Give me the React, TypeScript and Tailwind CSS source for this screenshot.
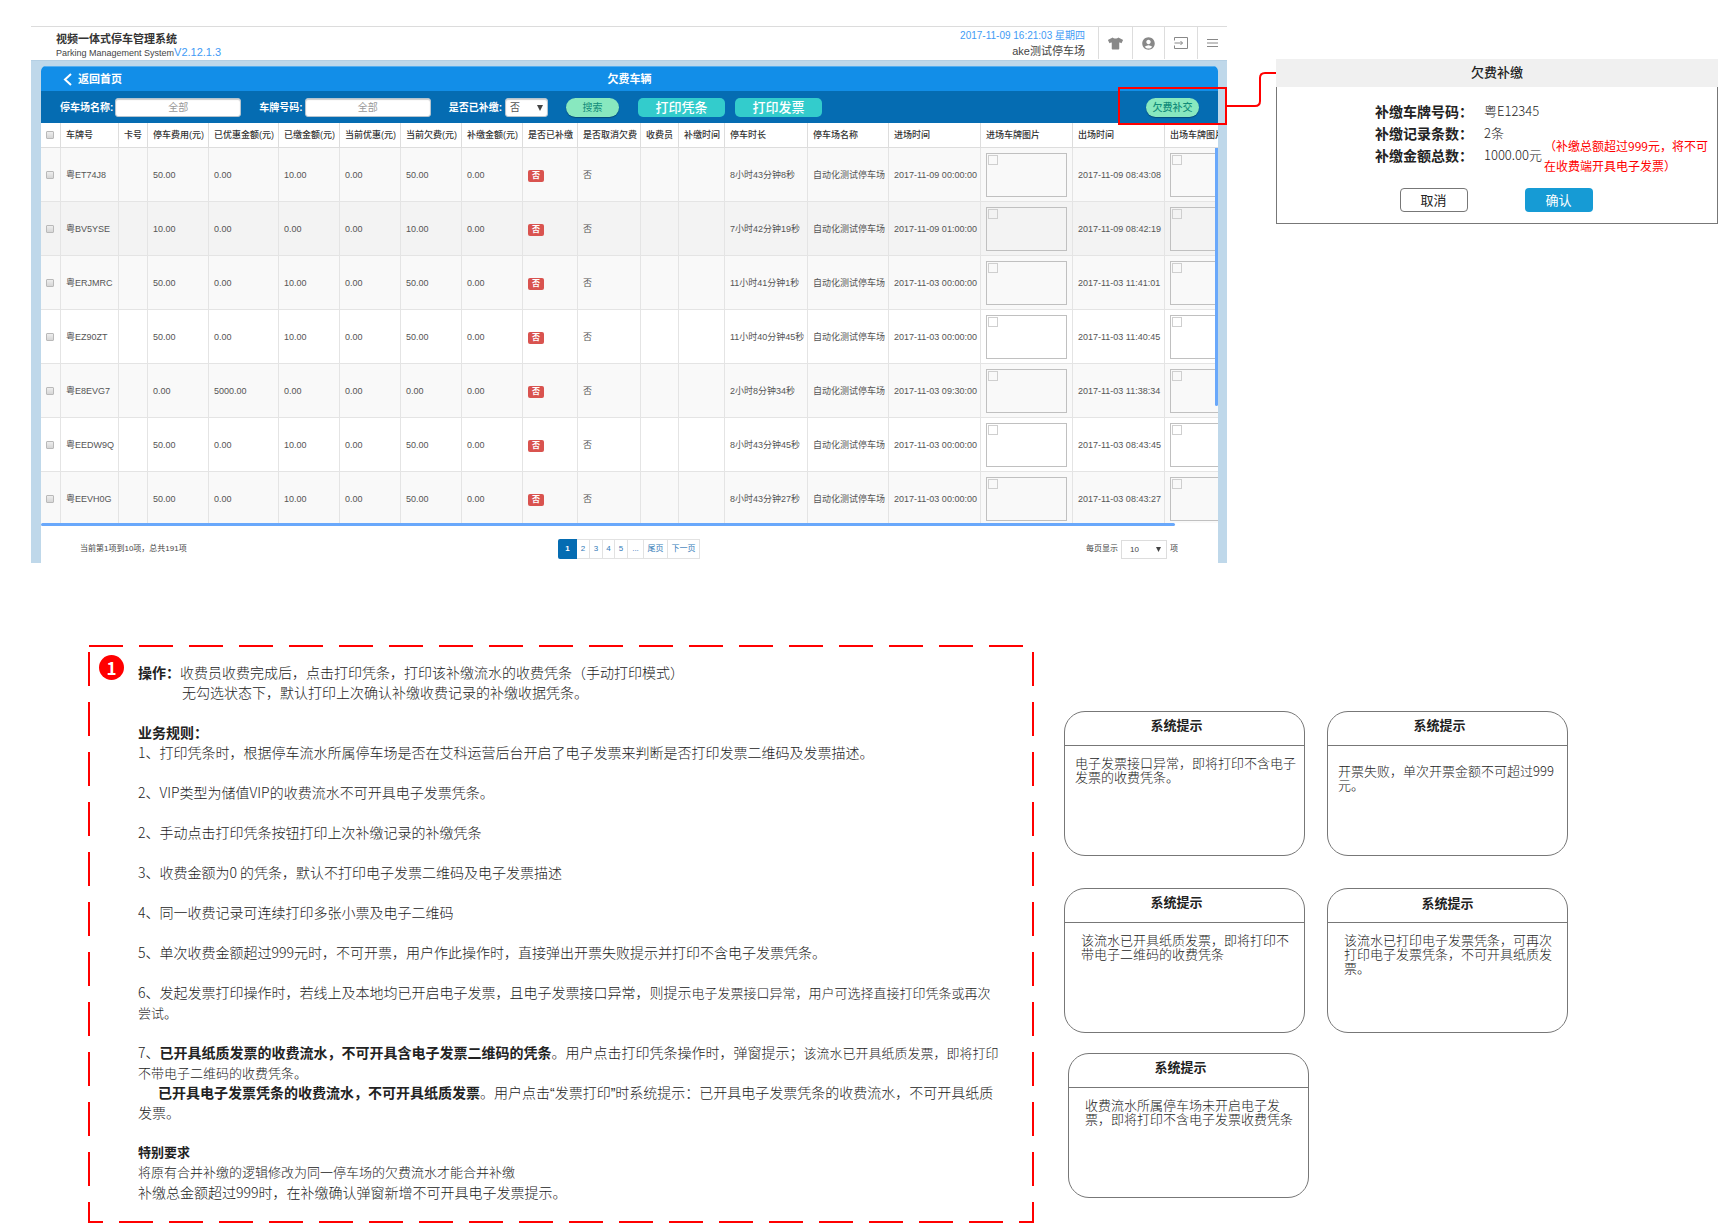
import React from "react";
import { MdAccountCircle } from "react-icons/md";
import { FaTshirt } from "react-icons/fa";

type Column = { key: string; label: string; width: string };

const columns: Column[] = [
  { key: "plate", label: "车牌号", width: "w-[58px]" },
  { key: "card", label: "卡号", width: "w-[29px]" },
  { key: "fee", label: "停车费用(元)", width: "w-[61px]" },
  { key: "discounted", label: "已优惠金额(元)", width: "w-[70px]" },
  { key: "paid", label: "已缴金额(元)", width: "w-[61px]" },
  { key: "discount", label: "当前优惠(元)", width: "w-[61px]" },
  { key: "owed", label: "当前欠费(元)", width: "w-[61px]" },
  { key: "makeup", label: "补缴金额(元)", width: "w-[61px]" },
  { key: "settled", label: "是否已补缴", width: "w-[55px]" },
  { key: "cancelled", label: "是否取消欠费", width: "w-[63px]" },
  { key: "collector", label: "收费员", width: "w-[38px]" },
  { key: "makeupTime", label: "补缴时间", width: "w-[46px]" },
  { key: "duration", label: "停车时长", width: "w-[83px]" },
  { key: "lot", label: "停车场名称", width: "w-[81px]" },
  { key: "inTime", label: "进场时间", width: "w-[92px]" },
  { key: "inImage", label: "进场车牌图片", width: "w-[92px]" },
  { key: "outTime", label: "出场时间", width: "w-[92px]" },
  { key: "outImage", label: "出场车牌图片", width: "w-[92px]" },
];

const makeRow = (
  bg: string,
  plate: string,
  fee: string,
  discounted: string,
  paid: string,
  owed: string,
  duration: string,
  inTime: string,
  outTime: string,
) => ({
  bg,
  cells: {
    plate,
    fee,
    discounted,
    paid,
    discount: "0.00",
    owed,
    makeup: "0.00",
    cancelled: "否",
    duration,
    lot: "自动化测试停车场",
    inTime,
    outTime,
  } as Record<string, string>,
});

const rows = [
  makeRow("bg-[#f9f9f9]", "粤ET74J8", "50.00", "0.00", "10.00", "50.00", "8小时43分钟8秒", "2017-11-09 00:00:00", "2017-11-09 08:43:08"),
  makeRow("bg-[#f3f3f3]", "粤BV5YSE", "10.00", "0.00", "0.00", "10.00", "7小时42分钟19秒", "2017-11-09 01:00:00", "2017-11-09 08:42:19"),
  makeRow("bg-[#f9f9f9]", "粤ERJMRC", "50.00", "0.00", "10.00", "50.00", "11小时41分钟1秒", "2017-11-03 00:00:00", "2017-11-03 11:41:01"),
  makeRow("bg-white", "粤EZ90ZT", "50.00", "0.00", "10.00", "50.00", "11小时40分钟45秒", "2017-11-03 00:00:00", "2017-11-03 11:40:45"),
  makeRow("bg-[#f9f9f9]", "粤E8EVG7", "0.00", "5000.00", "0.00", "0.00", "2小时8分钟34秒", "2017-11-03 09:30:00", "2017-11-03 11:38:34"),
  makeRow("bg-white", "粤EEDW9Q", "50.00", "0.00", "10.00", "50.00", "8小时43分钟45秒", "2017-11-03 00:00:00", "2017-11-03 08:43:45"),
  makeRow("bg-[#f9f9f9]", "粤EEVH0G", "50.00", "0.00", "10.00", "50.00", "8小时43分钟27秒", "2017-11-03 00:00:00", "2017-11-03 08:43:27"),
];

function TickBox({ label }: { label: string }) {
  return (
    <input
      type="checkbox"
      aria-label={label}
      className="block size-2 appearance-none rounded-[1px] border border-[#b9b9b9] bg-gradient-to-b from-[#eeeeee] to-[#d6d6d6] checked:bg-[#128ee8]"
    />
  );
}

function Picture() {
  return (
    <div className="h-11 w-[81px] border border-[#c0c0c0] p-px">
      <div className="size-[10px] border border-[#cfcfcf]" />
    </div>
  );
}

function Cell({ name, value }: { name: string; value?: string }) {
  if (name === "settled")
    return (
      <span className="mt-[3px] inline-block h-3 w-4 rounded-[2px] bg-[#d9534f] text-center text-[8px] leading-3 font-bold text-white">
        否
      </span>
    );
  if (name === "inImage" || name === "outImage") return <Picture />;
  return <>{value}</>;
}

function SystemHeader() {
  return (
    <header className="flex h-[34px] border-t border-[#dcdcdc] bg-white">
      <div className="pt-[5px] pl-[25px]">
        <h1 className="text-[11px] leading-[15px] font-bold text-[#333]">视频一体式停车管理系统</h1>
        <p className="text-[9px] leading-[10px] text-[#444]">
          Parking Management System<span className="text-[11px] text-[#3f9bf5]">V2.12.1.3</span>
        </p>
      </div>
      <div className="ml-auto pr-[13px] text-right">
        <p className="text-[10px] leading-[17px] text-[#3f9bf5]">2017-11-09 16:21:03 星期四</p>
        <p className="text-[11px] leading-[15px] text-[#444]">ake测试停车场</p>
      </div>
      <nav className="flex h-8 text-[#888]">
        <button type="button" aria-label="换肤" className="flex w-[34px] items-center justify-center border-l border-[#ddd]">
          <FaTshirt size={15} />
        </button>
        <button type="button" aria-label="用户" className="flex w-8 items-center justify-center border-l border-[#ddd]">
          <MdAccountCircle size={15} />
        </button>
        <button type="button" aria-label="退出" className="flex w-[33px] items-center justify-center border-l border-[#ddd]">
          <svg width="14" height="12" viewBox="0 0 14 12" fill="none" stroke="currentColor">
            <path d="M.5 3.5v-3h13v11H.5v-3M.5 6h8M6.500 4l2 2-2 2" />
          </svg>
        </button>
        <button type="button" aria-label="菜单" className="flex w-[30px] items-center justify-center border-l border-[#ddd]">
          <svg width="11" height="8" viewBox="0 0 11 8" stroke="currentColor">
            <path d="M0 .5h11M0 4h11M0 7.500h11" />
          </svg>
        </button>
      </nav>
    </header>
  );
}

const fieldClass = "h-[19px] rounded-[3px] border border-[#b5c4cf] bg-white text-[10px] shadow-[inset_0_1px_1px_rgba(0,0,0,0.2)]";
const pillClass =
  "h-[19px] w-[53px] rounded-full bg-[#88e8bf] text-[10px] leading-[19px] text-[#128c7a] shadow-[0_1px_1px_rgba(0,0,0,0.3)]";

function FilterBar() {
  return (
    <form className="flex h-8 items-center gap-[18px] bg-[#056cb2] pr-[19px] pl-[19px]">
      <div className="flex items-center gap-[2px]">
        <label htmlFor="lot" className="text-[10px] font-bold whitespace-nowrap text-white">
          停车场名称:
        </label>
        <input id="lot" placeholder="全部" className={`${fieldClass} w-[126px] text-center placeholder:text-[#999]`} />
      </div>
      <div className="flex items-center gap-[2px]">
        <label htmlFor="plate" className="text-[10px] font-bold whitespace-nowrap text-white">
          车牌号码:
        </label>
        <input id="plate" placeholder="全部" className={`${fieldClass} w-[126px] text-center placeholder:text-[#999]`} />
      </div>
      <div className="flex items-center gap-[3px]">
        <label htmlFor="settled" className="text-[10px] font-bold whitespace-nowrap text-white">
          是否已补缴:
        </label>
        <div className="relative flex">
          <select id="settled" className={`${fieldClass} w-[43px] appearance-none pl-1 text-[#555]`}>
            <option>否</option>
            <option>是</option>
          </select>
          <svg className="pointer-events-none absolute top-[7px] right-[5px]" width="6" height="6" viewBox="0 0 6 6" fill="#444">
            <path d="M0 0h6L3 6z" />
          </svg>
        </div>
      </div>
      <button type="button" className={pillClass}>
        搜索
      </button>
      <div className="flex items-center gap-[10px] pl-px">
        <button type="button" className="h-[19px] w-[87px] rounded-[5px] bg-[#33cccc] text-[13px] leading-5 font-medium text-white">
          打印凭条
        </button>
        <button type="button" className="h-[19px] w-[87px] rounded-[5px] bg-[#33cccc] text-[13px] leading-5 font-medium text-white">
          打印发票
        </button>
      </div>
      <button type="button" className={`${pillClass} ml-auto font-medium`}>
        欠费补交
      </button>
    </form>
  );
}

function DebtTable() {
  return (
    <div className="relative h-[400px] overflow-hidden">
      <table className="w-[1216px] table-fixed border-separate border-spacing-0 text-left text-[9px] leading-3 whitespace-nowrap">
        <thead>
          <tr className="h-[25px] text-[#333]">
            <th className="w-5 border-r border-b border-[#ddd] pl-[5px]">
              <TickBox label="全选" />
            </th>
            {columns.map((c) => (
              <th key={c.key} className={`${c.width} border-r border-b border-[#ddd] pl-[5px] font-medium`}>
                {c.label}
              </th>
            ))}
          </tr>
        </thead>
        <tbody>
          {rows.map((r) => (
            <tr key={r.cells.plate} className={`h-[54px] text-[#555] ${r.bg}`}>
              <td className="border-r border-b border-[#e4e4e4] pl-[5px]">
                <TickBox label={`选择 ${r.cells.plate}`} />
              </td>
              {columns.map((c) => (
                <td key={c.key} className="border-r border-b border-[#e4e4e4] pl-[5px]">
                  <Cell name={c.key} value={r.cells[c.key]} />
                </td>
              ))}
            </tr>
          ))}
        </tbody>
      </table>
      <div className="absolute top-[25px] right-0 h-[258px] w-[3px] rounded-b bg-[#69a8fb]" />
    </div>
  );
}

const pages = [
  { label: "2", width: "w-[13px]" },
  { label: "3", width: "w-[13px]" },
  { label: "4", width: "w-[12px]" },
  { label: "5", width: "w-[13px]" },
  { label: "...", width: "w-4" },
  { label: "尾页", width: "w-6" },
  { label: "下一页", width: "w-8" },
];

function Pager() {
  return (
    <footer className="grid grid-cols-[1fr_auto_1fr] items-center pt-[13px] pr-10 pb-1 pl-[39px] text-[8px] leading-[18px] text-[#444]">
      <p>当前第1项到10项，总共191项</p>
      <nav className="flex h-5">
        <a href="#page-1" className="w-[19px] rounded-l-[2px] bg-[#056cb2] text-center leading-5 font-bold text-white">
          1
        </a>
        {pages.map((p) => (
          <a key={p.label} href={`#page-${p.label}`} className={`${p.width} border-y border-r border-[#e2e2e2] text-center text-[#337ab7]`}>
            {p.label}
          </a>
        ))}
      </nav>
      <div className="flex items-center justify-end gap-[3px]">
        <label htmlFor="size">每页显示</label>
        <div className="relative flex">
          <select id="size" className="h-[19px] w-[46px] appearance-none border border-[#ddd] bg-white pl-2 text-[8px]">
            <option>10</option>
            <option>20</option>
          </select>
          <svg className="pointer-events-none absolute top-[7px] right-[6px]" width="5" height="5" viewBox="0 0 6 6" fill="#444">
            <path d="M0 0h6L3 6z" />
          </svg>
        </div>
        <span>项</span>
      </div>
    </footer>
  );
}

function ParkingSystem() {
  return (
    <section className="relative font-['Liberation_Sans','Noto_Sans_CJK_SC',sans-serif]">
      <SystemHeader />
      <div className="border-t border-[#b4cfe3] bg-[#bfd8ea] pt-[5px] pr-[9px] pl-[10px]">
        <div className="overflow-hidden rounded-t-[5px] bg-white">
          <div className="grid h-[25px] grid-cols-[1fr_auto_1fr] items-center border-t border-[#55aeef] bg-[#128ee8] text-[11px] leading-4 font-bold text-white">
            <a href="#home" className="flex items-center gap-[6px] pl-[22px]">
              <svg width="9" height="13" viewBox="0 0 9 13" fill="none" stroke="white" strokeWidth="2">
                <path d="M8 1 2 6.500 8 12" />
              </svg>
              返回首页
            </a>
            <h2>欠费车辆</h2>
          </div>
          <FilterBar />
          <DebtTable />
          <div className="mr-[43px] h-[3px] rounded-full bg-[#69a8fb]" />
          <Pager />
        </div>
      </div>
      <div className="pointer-events-none absolute top-[61px] right-0 h-[38px] w-[109px] border-2 border-[#ff0000]" />
      <svg className="absolute top-[46px] left-full" width="49" height="36" viewBox="0 0 49 36" fill="none" stroke="#ff0000" strokeWidth="2">
        <path d="M0 34h28q5 0 5-5V6q0-5 5-5h11" />
      </svg>
    </section>
  );
}

function PaymentDialog() {
  return (
    <section className="mt-[33px] self-start border border-t-0 border-[#777] text-[13px] text-[#222]">
      <h2 className="-mx-px bg-[#f0f0f0] pb-[2px] text-center leading-[26px] font-medium">欠费补缴</h2>
      <dl className="grid grid-cols-[109px_1fr] pt-[13px] pb-px pl-[98px] leading-[22px] font-light">
        <dt className="text-[14px] font-bold whitespace-nowrap">补缴车牌号码：</dt>
        <dd>粤E12345</dd>
        <dt className="text-[14px] font-bold whitespace-nowrap">补缴记录条数：</dt>
        <dd>2条</dd>
        <dt className="text-[14px] font-bold whitespace-nowrap">补缴金额总数：</dt>
        <dd className="flex gap-[2px]">
          1000.00元
          <span className="-mt-2 text-[12px] leading-5 font-normal whitespace-nowrap text-[#ff0000]">
            （补缴总额超过999元，将不可
            <br />
            在收费端开具电子发票）
          </span>
        </dd>
      </dl>
      <div className="flex justify-center gap-[57px] pt-[11px] pr-[2px] pb-[11px]">
        <button type="button" className="h-6 w-[68px] rounded-[4px] border border-[#777]">
          取消
        </button>
        <button type="button" className="h-6 w-[68px] rounded-[4px] bg-[#169bd5] text-white">
          确认
        </button>
      </div>
    </section>
  );
}

function Small({ children }: { children: React.ReactNode }) {
  return <span className="text-[13px] leading-none">{children}</span>;
}

function Strong({ children }: { children: React.ReactNode }) {
  return <strong className="leading-none font-bold">{children}</strong>;
}

function Quote({ children }: { children: React.ReactNode }) {
  return <span className="font-['Liberation_Sans'] leading-none">{children}</span>;
}

function Notes() {
  return (
    <section className="relative self-start pt-[17px] pb-[21px] pl-[50px]">
      <svg className="pointer-events-none absolute inset-0 size-full" fill="none" stroke="#ff0000" strokeWidth="2">
        <rect x="1" y="1" className="h-[calc(100%-2px)] w-[calc(100%-2px)]" strokeDasharray="34 16" />
      </svg>
      <span className="absolute top-[10px] left-[11px] size-[25px] rounded-full bg-[#ff0000] text-center text-[17px] leading-[25px] font-bold text-white">
        1
      </span>
      <div className="text-[14px] leading-5 font-light whitespace-nowrap text-[#222]">
        <p>
          <Strong>操作：</Strong>收费员收费完成后，点击打印凭条，打印该补缴流水的收费凭条（手动打印模式）
        </p>
        <p className="pl-11">无勾选状态下，默认打印上次确认补缴收费记录的补缴收据凭条。</p>
        <h3 className="mt-5 font-bold">业务规则：</h3>
        <div className="flex flex-col gap-5">
          <p>1、打印凭条时，根据停车流水所属停车场是否在艾科运营后台开启了电子发票来判断是否打印发票二维码及发票描述。</p>
          <p>2、VIP类型为储值VIP的收费流水不可开具电子发票凭条。</p>
          <p>2、手动点击打印凭条按钮打印上次补缴记录的补缴凭条</p>
          <p>3、收费金额为0 的凭条，默认不打印电子发票二维码及电子发票描述</p>
          <p>4、同一收费记录可连续打印多张小票及电子二维码</p>
          <p>5、单次收费金额超过999元时，不可开票，用户作此操作时，直接弹出开票失败提示并打印不含电子发票凭条。</p>
          <p>
            6、发起发票打印操作时，若线上及本地均已开启电子发票，且电子发票接口异常，则提示
            <Small>电子发票接口异常，用户可选择直接打印凭条或再次</Small>
            <br />
            <Small>尝试。</Small>
          </p>
          <div>
            <p>
              7、<Strong>已开具纸质发票的收费流水，不可开具含电子发票二维码的凭条</Strong>
              。用户点击打印凭条操作时，弹窗提示；
              <Small>该流水已开具纸质发票，即将打印</Small>
              <br />
              <Small>不带电子二维码的收费凭条。</Small>
            </p>
            <p>
              <span className="pl-5 leading-none">
                <Strong>已开具电子发票凭条的收费流水，不可开具纸质发票</Strong>
              </span>
              。用户点击
              <Quote>“</Quote>发票打印<Quote>”</Quote>
              时系统提示：已开具电子发票凭条的收费流水，不可开具纸质
              <br />
              发票。
            </p>
          </div>
          <div>
            <h3 className="text-[13px] font-bold">特别要求</h3>
            <p className="text-[13px]">将原有合并补缴的逻辑修改为同一停车场的欠费流水才能合并补缴</p>
            <p>补缴总金额超过999时，在补缴确认弹窗新增不可开具电子发票提示。</p>
          </div>
        </div>
      </div>
    </section>
  );
}

type PromptProps = { titleClass: string; bodyClass: string; className?: string; children: React.ReactNode };

function Prompt({ titleClass, bodyClass, className = "", children }: PromptProps) {
  return (
    <article className={`h-[145px] w-[241px] rounded-[21px] border border-[#777] text-[13px] text-[#222] ${className}`}>
      <h3 className={`h-[34px] border-b border-[#777] text-center font-bold ${titleClass}`}>系统提示</h3>
      <p className={`leading-[14px] font-light whitespace-nowrap ${bodyClass}`}>{children}</p>
    </article>
  );
}

function Prompts() {
  return (
    <section className="grid grid-cols-[241px_241px] content-start gap-x-[22px] pt-[66px]">
      <Prompt titleClass="pr-4 leading-[26px]" bodyClass="pt-[10px] pl-[10px]" className="mb-8">
        电子发票接口异常，即将打印不含电子
        <br />
        发票的收费凭条。
      </Prompt>
      <Prompt titleClass="pr-4 leading-[26px]" bodyClass="pt-[18px] pl-[10px]">
        开票失败，单次开票金额不可超过999
        <br />
        元。
      </Prompt>
      <Prompt titleClass="pr-4 leading-[26px]" bodyClass="pt-[10px] pl-4" className="mb-5">
        该流水已开具纸质发票，即将打印不
        <br />
        带电子二维码的收费凭条
      </Prompt>
      <Prompt titleClass="leading-7" bodyClass="pt-[10px] pl-4">
        该流水已打印电子发票凭条，可再次
        <br />
        打印电子发票凭条，不可开具纸质发
        <br />
        票。
      </Prompt>
      <Prompt titleClass="pr-4 leading-[26px]" bodyClass="pt-[10px] pl-4" className="ml-1">
        收费流水所属停车场未开启电子发
        <br />
        票，即将打印不含电子发票收费凭条
      </Prompt>
    </section>
  );
}

export default function App() {
  return (
    <main lang="zh-CN" className="overflow-x-hidden bg-white font-['Noto_Sans_CJK_SC',sans-serif]">
      <div className="grid grid-cols-[minmax(0,1196fr)_minmax(0,442fr)] gap-[49px] pt-[26px] pl-[31px]">
        <ParkingSystem />
        <PaymentDialog />
      </div>
      <div className="mt-[82px] grid grid-cols-[minmax(0,946fr)_minmax(0,654fr)] gap-[30px] pl-[88px]">
        <Notes />
        <Prompts />
      </div>
    </main>
  );
}
